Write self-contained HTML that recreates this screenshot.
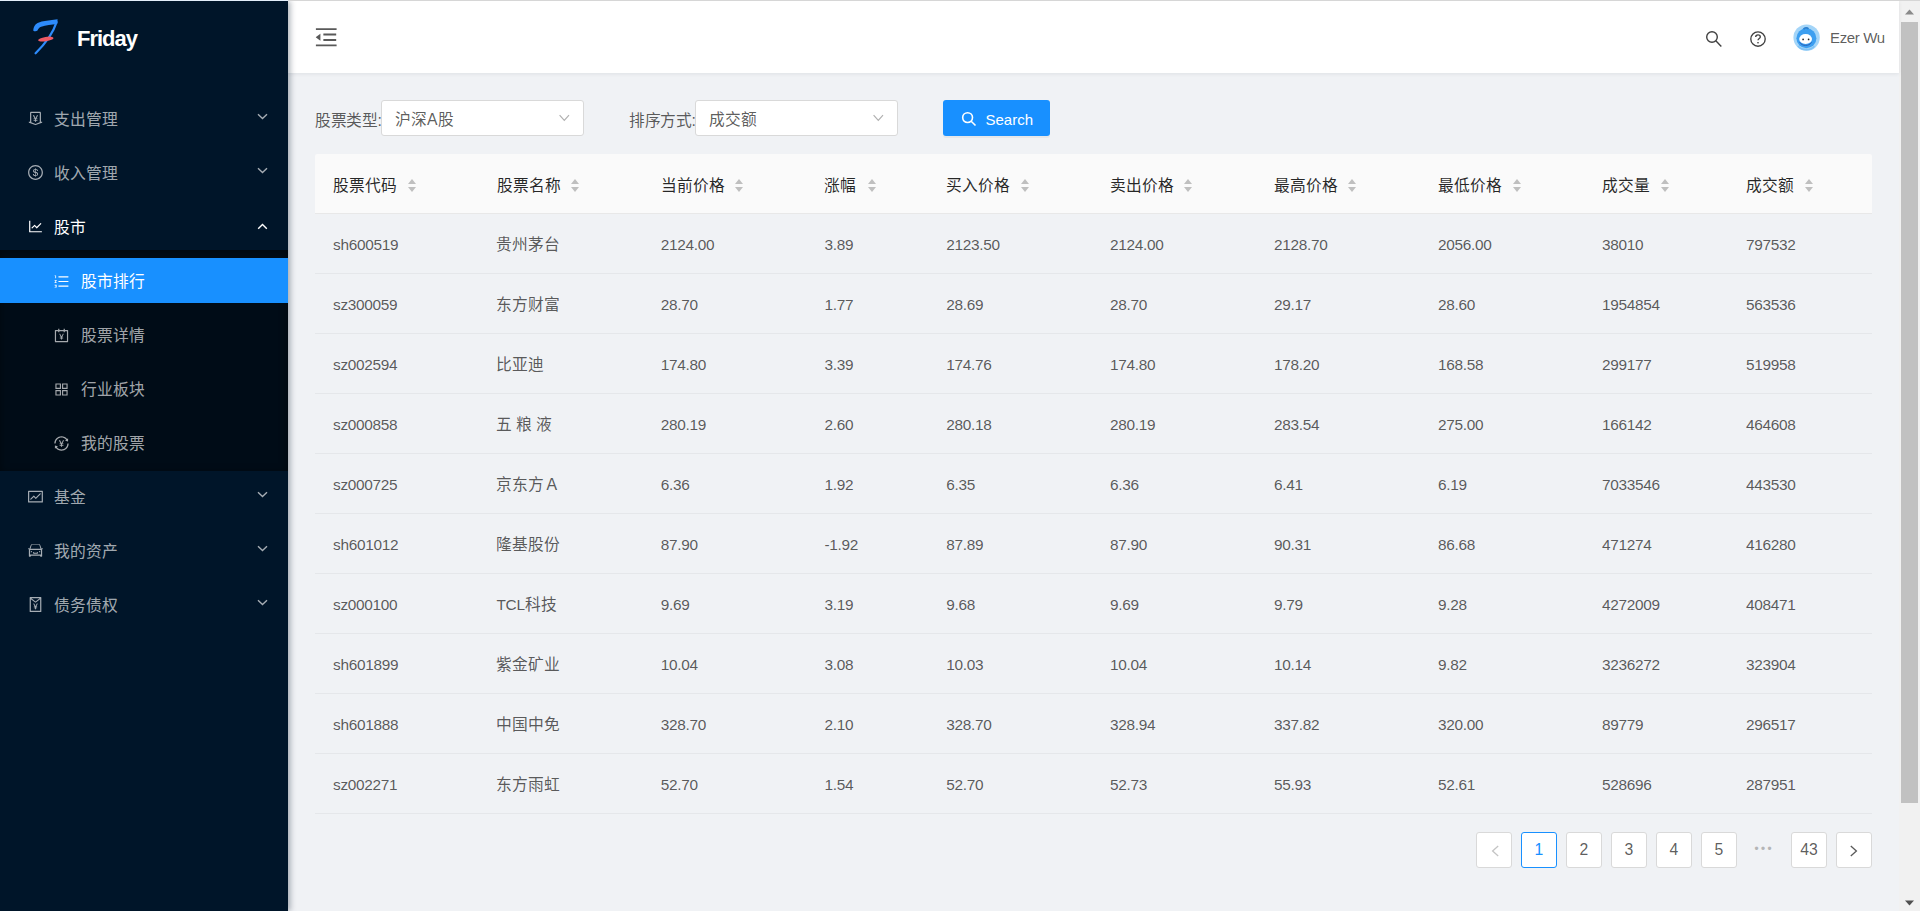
<!DOCTYPE html>
<html lang="zh-CN">
<head>
<meta charset="utf-8">
<title>Friday</title>
<style>
*{box-sizing:border-box;margin:0;padding:0}
html,body{width:1920px;height:911px;overflow:hidden}
body{position:relative;background:#f0f2f5;font-family:"Liberation Sans",sans-serif;font-size:15.75px;color:rgba(0,0,0,.65)}
.topline{position:absolute;left:0;top:0;width:1920px;height:1px;background:#d6d6d6;z-index:10}
.topline:before{content:"";position:absolute;left:0;top:0;width:288px;height:1px;background:#e3eefa}
#sider{position:absolute;left:0;top:1px;width:288px;height:910px;background:#001529;box-shadow:2px 0 6px rgba(0,21,41,.35);z-index:3}
.logo{position:absolute;left:0;top:0;width:288px;height:72px}
.logo .t{position:absolute;left:77px;top:27.3px;font-size:22px;line-height:22px;font-weight:bold;color:#fff;letter-spacing:-1px}
.mi{position:absolute;left:0;width:288px;height:45px;color:rgba(255,255,255,.65)}
.mi .ic{position:absolute;left:26.5px;top:14.3px;width:17px;height:17px}
.mi .tx{position:absolute;left:54px;top:1px;line-height:45px;white-space:nowrap}
.mi .ar{position:absolute;left:257px;top:17px}
.sub .ic{left:53px;top:15px}
.sub .tx{left:81px}
.submenu{position:absolute;left:0;top:248.5px;width:288px;height:221px;background:#000c17;box-shadow:inset 0 2px 8px rgba(0,0,0,.45)}
.sel{background:#1890ff;color:#fff}
.open{color:#fff}

#header{position:absolute;left:288px;top:1px;width:1611px;height:72px;background:#fff;box-shadow:0 1px 4px rgba(0,21,41,.08);z-index:2}
#header .trig{position:absolute;left:25.25px;top:23.25px}
#header .hico{position:absolute}
#header .name{position:absolute;left:1542px;top:26.5px;font-size:15px;letter-spacing:-.35px;color:rgba(0,0,0,.65);line-height:20px}

.lbl{position:absolute;top:103px;line-height:36px;color:rgba(0,0,0,.65);white-space:nowrap;letter-spacing:-.4px}
.sel-box{position:absolute;top:100px;width:203px;height:36px;background:#fff;border:1px solid #d9d9d9;border-radius:3px}
.sel-box .v{position:absolute;left:13px;top:2px;line-height:34px;color:rgba(0,0,0,.65)}
.sel-box svg{position:absolute;left:176.5px;top:12px}
.btn{position:absolute;left:943px;top:100px;width:107px;height:36px;background:#1890ff;border-radius:3px;color:#fff;box-shadow:0 2px 0 rgba(0,0,0,.045)}
.btn svg{position:absolute;left:18px;top:11px}
.btn span{position:absolute;left:42.5px;top:1.5px;line-height:36px;font-size:15px}

#table{position:absolute;left:315px;top:154px;width:1557px}
.thead{position:absolute;left:0;top:0;width:1557px;height:60px;background:#fafafa;border-bottom:1px solid #e8e8e8;border-radius:2px 2px 0 0}
.th{position:absolute;top:1.5px;line-height:59px;color:rgba(0,0,0,.85);white-space:nowrap}
.so{position:absolute;top:25px}
.row{position:absolute;left:0;width:1557px;height:60px;border-bottom:1px solid #e5e7ea}
.td{position:absolute;top:.5px;line-height:60px;white-space:nowrap}
.lt{font-size:15.4px;letter-spacing:-.3px;position:relative;top:.2px}

.pg{position:absolute;top:832px;width:36px;height:36px;border:1px solid #d9d9d9;border-radius:3px;background:#fff;text-align:center;line-height:34px;color:rgba(0,0,0,.65)}
.pg.act{border-color:#1890ff;color:#1890ff}
.pg.dis{color:rgba(0,0,0,.25)}
.ell{position:absolute;top:832px;left:1746px;width:36px;height:36px;text-align:center;line-height:34px;color:rgba(0,0,0,.25);letter-spacing:2px;font-size:13px}

#sb{position:absolute;left:1899px;top:1px;width:21px;height:910px;background:#f1f1f1}
#sb .thumb{position:absolute;left:2px;top:21px;width:17px;height:781px;background:#c1c1c1}
</style>
</head>
<body>
<div class="topline"></div>
<div id="sider">
  <div class="logo">
    <svg style="position:absolute;left:0;top:-1px" width="80" height="72" viewBox="0 0 80 72">
      <path d="M33.2 30.4C33.6 27 34.8 24.2 37.6 22.9 42.5 21 50 20.1 57.6 19.3L57.2 24C51.5 24.4 45.8 25.3 41.2 26.8 39.4 27.4 38.2 28.8 37.5 30.6 36.3 31.7 34.2 31.6 33.2 30.4Z" fill="#2d8bfb"/>
      <path d="M56.6 22C53.8 31 47.5 41.5 35.6 53.2" fill="none" stroke="#2d8bfb" stroke-width="2.3" stroke-linecap="round"/>
      <ellipse cx="45.8" cy="39.1" rx="7.8" ry="2.2" transform="rotate(-9 45.8 39.1)" fill="#f05a64"/>
    </svg>
    <div class="t">Friday</div>
  </div>
  <div class="submenu"></div>
  <!-- menu items inserted below -->
  <div class="mi" style="top:95px"><svg class="ic" viewBox="0 0 1024 1024" width="17" height="17"><path fill="currentColor" d="M911.5 700.7a8 8 0 00-10.3-4.8L840 718.2V180c0-37.6-30.4-68-68-68H252c-37.6 0-68 30.4-68 68v538.2l-61.3-22.3c-.9-.3-1.8-.5-2.7-.5-4.4 0-8 3.6-8 8V763c0 3.3 2.1 6.3 5.3 7.5L501 910.1c7.1 2.6 14.8 2.6 21.9 0l383.8-139.5c3.2-1.2 5.3-4.2 5.3-7.5v-59.6c0-1-.2-1.9-.5-2.8zM512 837.5l-256-93.1V184h512v560.4l-256 93.1zM660.6 312h-54.5c-3 0-5.8 1.7-7.1 4.4l-84.7 168.8H511l-84.7-168.8a8 8 0 00-7.1-4.4h-55.7c-1.3 0-2.6.3-3.8 1-3.9 2.1-5.3 7-3.2 10.8l103.9 191.6h-57c-4.4 0-8 3.6-8 8v27.1c0 4.4 3.6 8 8 8h76v39h-76c-4.4 0-8 3.6-8 8v27.1c0 4.4 3.6 8 8 8h76V704c0 4.4 3.6 8 8 8h49.9c4.4 0 8-3.6 8-8v-63.5h76.3c4.4 0 8-3.6 8-8v-27.1c0-4.4-3.6-8-8-8h-76.3v-39h76.3c4.4 0 8-3.6 8-8v-27.1c0-4.4-3.6-8-8-8H564l103.7-191.6c.6-1.2 1-2.5 1-3.8-.1-4.3-3.7-7.9-8.1-7.9z"/></svg><span class="tx">支出管理</span><svg class="ar" width="11" height="7" viewBox="0 0 11 7"><path d="M1 1.3L5.5 5.6 10 1.3" fill="none" stroke="currentColor" stroke-width="1.4"/></svg></div>
<div class="mi" style="top:149px"><svg class="ic" viewBox="0 0 1024 1024" width="17" height="17"><path fill="currentColor" d="M512 64C264.6 64 64 264.6 64 512s200.6 448 448 448 448-200.6 448-448S759.4 64 512 64zm0 820c-205.4 0-372-166.6-372-372s166.6-372 372-372 372 166.6 372 372-166.6 372-372 372zm47.7-395.2l-25.4-5.9V348.6c38 5.2 61.5 30.1 65.5 59.2.5 4 3.9 6.9 7.9 6.9h44.9c4.7 0 8.4-4.1 8-8.8-6.1-62.3-57.4-102.3-125.9-109.2V263c0-4.4-3.6-8-8-8h-28.1c-4.4 0-8 3.6-8 8v33c-70.8 6.9-126.2 46-126.2 119 0 67.6 49.8 100.2 102.1 112.7l24.7 6.3v142.7c-44.2-5.9-69-29.5-74.1-61.3-.6-3.8-4-6.6-7.9-6.6H363c-4.7 0-8.4 4-8 8.7 4.5 55 46.2 105.6 135.2 112.1V761c0 4.4 3.6 8 8 8h28.4c4.4 0 8-3.6 8-8.1l-.2-31.7c78.3-6.9 134.3-48.8 134.3-124-.1-69.4-44.2-100.4-109-116.4zm-68.6-16.2c-5.6-1.6-10.3-3.1-15-5-33.8-12.2-49.5-31.9-49.5-57.3 0-36.3 27.5-57 64.5-61.7v124zM534.3 677V543.3c3.1.9 5.9 1.6 8.8 2.2 47.3 14.4 63.2 34.4 63.2 65.1 0 39.1-29.4 62.6-72 66.4z"/></svg><span class="tx">收入管理</span><svg class="ar" width="11" height="7" viewBox="0 0 11 7"><path d="M1 1.3L5.5 5.6 10 1.3" fill="none" stroke="currentColor" stroke-width="1.4"/></svg></div>
<div class="mi open" style="top:203px"><svg class="ic" viewBox="0 0 1024 1024" width="17" height="17"><path fill="currentColor" d="M888 792H200V168c0-4.4-3.6-8-8-8h-56c-4.4 0-8 3.6-8 8v688c0 4.4 3.6 8 8 8h752c4.4 0 8-3.6 8-8v-56c0-4.4-3.6-8-8-8zM305.8 637.7c3.1 3.1 8.1 3.1 11.3 0l138.3-137.6L583 628.5c3.1 3.1 8.2 3.1 11.3 0l275.4-275.3c3.1-3.1 3.1-8.2 0-11.3l-39.6-39.6a8.03 8.03 0 00-11.3 0l-230 229.9L461.4 404a8.03 8.03 0 00-11.3 0L266.3 586.7a8.03 8.03 0 000 11.3l39.5 39.7z"/></svg><span class="tx">股市</span><svg class="ar" style="top:18.5px" width="11" height="7" viewBox="0 0 11 7"><path d="M1.2 5.7L5.5 1.5 9.8 5.7" fill="none" stroke="currentColor" stroke-width="1.4"/></svg></div>
<div class="mi sub sel" style="top:257px"><svg class="ic" viewBox="0 0 1024 1024" width="17" height="17"><path fill="currentColor" d="M920 760H336c-4.4 0-8 3.6-8 8v56c0 4.4 3.6 8 8 8h584c4.4 0 8-3.6 8-8v-56c0-4.4-3.6-8-8-8zm0-568H336c-4.4 0-8 3.6-8 8v56c0 4.4 3.6 8 8 8h584c4.4 0 8-3.6 8-8v-56c0-4.4-3.6-8-8-8zm0 284H336c-4.4 0-8 3.6-8 8v56c0 4.4 3.6 8 8 8h584c4.4 0 8-3.6 8-8v-56c0-4.4-3.6-8-8-8zM216 712H100c-2.2 0-4 1.8-4 4v34c0 2.2 1.8 4 4 4h72.4v20.5h-35.7c-2.2 0-4 1.8-4 4v34c0 2.2 1.8 4 4 4h35.7V838H100c-2.2 0-4 1.8-4 4v34c0 2.2 1.8 4 4 4h116c2.2 0 4-1.8 4-4V716c0-2.2-1.8-4-4-4zM100 188h38v120c0 2.2 1.8 4 4 4h40c2.2 0 4-1.8 4-4V152c0-4.4-3.6-8-8-8h-78c-2.2 0-4 1.8-4 4v36c0 2.2 1.8 4 4 4zm116 240H100c-2.2 0-4 1.8-4 4v36c0 2.2 1.8 4 4 4h68.4l-70.3 77.7a8.3 8.3 0 00-2.1 5.4V592c0 2.2 1.8 4 4 4h116c2.2 0 4-1.8 4-4v-36c0-2.2-1.8-4-4-4h-68.4l70.3-77.7a8.3 8.3 0 002.1-5.4V432c0-2.2-1.8-4-4-4z"/></svg><span class="tx">股市排行</span></div>
<div class="mi sub" style="top:311px"><svg class="ic" viewBox="0 0 1024 1024" width="17" height="17"><path fill="currentColor" d="M880 184H712v-64c0-4.4-3.6-8-8-8h-56c-4.4 0-8 3.6-8 8v64H384v-64c0-4.4-3.6-8-8-8h-56c-4.4 0-8 3.6-8 8v64H144c-17.7 0-32 14.3-32 32v664c0 17.7 14.3 32 32 32h736c17.7 0 32-14.3 32-32V216c0-17.7-14.3-32-32-32zm-40 656H184V256h128v48c0 4.4 3.6 8 8 8h56c4.4 0 8-3.6 8-8v-48h256v48c0 4.4 3.6 8 8 8h56c4.4 0 8-3.6 8-8v-48h128v584zM639.5 414h-45c-3 0-5.8 1.7-7.1 4.4L514 563.8h-2.8l-73.4-145.4a8 8 0 00-7.1-4.4h-46c-1.3 0-2.7.3-3.8 1-3.9 2.1-5.3 7-3.2 10.9l89.3 164h-48.6c-4.4 0-8 3.6-8 8v21.3c0 4.4 3.6 8 8 8h65.1v33.7h-65.1c-4.4 0-8 3.6-8 8v21.3c0 4.4 3.6 8 8 8h65.1V752c0 4.4 3.6 8 8 8h41.3c4.4 0 8-3.6 8-8v-53.8h65.4c4.4 0 8-3.6 8-8v-21.3c0-4.4-3.6-8-8-8h-65.4v-33.7h65.4c4.4 0 8-3.6 8-8v-21.3c0-4.4-3.6-8-8-8h-49.1l89.3-164.1c.6-1.2 1-2.5 1-3.8.1-4.4-3.4-8-7.9-8z"/></svg><span class="tx">股票详情</span></div>
<div class="mi sub" style="top:365px"><svg class="ic" viewBox="0 0 1024 1024" width="17" height="17"><path fill="currentColor" d="M464 144H160c-8.8 0-16 7.2-16 16v304c0 8.8 7.2 16 16 16h304c8.8 0 16-7.2 16-16V160c0-8.8-7.2-16-16-16zm-52 268H212V212h200v200zm452-268H560c-8.8 0-16 7.2-16 16v304c0 8.8 7.2 16 16 16h304c8.8 0 16-7.2 16-16V160c0-8.8-7.2-16-16-16zm-52 268H612V212h200v200zM464 544H160c-8.8 0-16 7.2-16 16v304c0 8.8 7.2 16 16 16h304c8.8 0 16-7.2 16-16V560c0-8.8-7.2-16-16-16zm-52 268H212V612h200v200zm452-268H560c-8.8 0-16 7.2-16 16v304c0 8.8 7.2 16 16 16h304c8.8 0 16-7.2 16-16V560c0-8.8-7.2-16-16-16zm-52 268H612V612h200v200z"/></svg><span class="tx">行业板块</span></div>
<div class="mi sub" style="top:419px"><svg class="ic" viewBox="0 0 1024 1024" width="17" height="17"><path fill="currentColor" d="M668.6 320c0-4.4-3.6-8-8-8h-54.5c-3 0-5.8 1.7-7.1 4.4l-84.7 168.8H511l-84.7-168.8a8 8 0 00-7.1-4.4h-55.7c-1.3 0-2.6.3-3.8 1-3.9 2.1-5.3 7-3.2 10.8l103.9 191.6h-57c-4.4 0-8 3.6-8 8v27.1c0 4.4 3.6 8 8 8h76v39h-76c-4.4 0-8 3.6-8 8v27.1c0 4.4 3.6 8 8 8h76V704c0 4.4 3.6 8 8 8h49.9c4.4 0 8-3.6 8-8v-63.5h76.3c4.4 0 8-3.6 8-8v-27.1c0-4.4-3.6-8-8-8h-76.3v-39h76.3c4.4 0 8-3.6 8-8v-27.1c0-4.4-3.6-8-8-8H564l103.7-191.6c.5-1.1.9-2.4.9-3.7zM157.9 504.2a352.7 352.7 0 01103.5-242.4c32.5-32.5 70.3-58.1 112.4-75.9 43.6-18.4 89.9-27.8 137.6-27.8 47.8 0 94.1 9.3 137.6 27.8 42.1 17.8 79.9 43.4 112.4 75.9 10 10 19.3 20.5 27.9 31.4l-50 39.1a8 8 0 003 14.1l156.8 38.3c5 1.2 9.9-2.6 9.9-7.7l.8-161.5c0-6.7-7.7-10.5-12.9-6.3l-47.8 37.4C770.7 146.3 648.6 82 511.5 82 277 82 86.3 270.1 82 503.8a8 8 0 008 8.2h60c4.3 0 7.8-3.5 7.9-7.8zM934 512h-60c-4.3 0-7.9 3.5-8 7.8a352.7 352.7 0 01-103.5 242.4 352.57 352.57 0 01-112.4 75.9c-43.6 18.4-89.9 27.8-137.6 27.8s-94.1-9.3-137.6-27.8a352.57 352.57 0 01-112.4-75.9c-10-10-19.3-20.5-27.9-31.4l49.9-39.1a8 8 0 00-3-14.1l-156.8-38.3c-5-1.2-9.9 2.6-9.9 7.7l-.8 161.7c0 6.7 7.7 10.5 12.9 6.3l47.8-37.4C253.3 877.7 375.4 942 512.5 942 747 942 937.7 753.9 942 520.2a8 8 0 00-8-8.2z"/></svg><span class="tx">我的股票</span></div>
<div class="mi" style="top:473px"><svg class="ic" viewBox="0 0 1024 1024" width="17" height="17"><path fill="currentColor" d="M926 164H94c-17.7 0-32 14.3-32 32v640c0 17.7 14.3 32 32 32h832c17.7 0 32-14.3 32-32V196c0-17.7-14.3-32-32-32zm-40 632H134V236h752v560zm-658.9-82.3c3.1 3.1 8.2 3.1 11.3 0l172.5-172.5 114.4 114.5c3.1 3.1 8.2 3.1 11.3 0l297-297.2c3.1-3.1 3.1-8.2 0-11.3l-36.8-36.8a8.03 8.03 0 00-11.3 0L531 565 416.6 450.5a8.03 8.03 0 00-11.3 0l-214.9 215a8.03 8.03 0 000 11.3l36.7 36.9z"/></svg><span class="tx">基金</span><svg class="ar" width="11" height="7" viewBox="0 0 11 7"><path d="M1 1.3L5.5 5.6 10 1.3" fill="none" stroke="currentColor" stroke-width="1.4"/></svg></div>
<div class="mi" style="top:527px"><svg class="ic" viewBox="0 0 1024 1024" width="17" height="17"><path fill="currentColor" d="M380 704h264c4.4 0 8-3.6 8-8v-84c0-4.4-3.6-8-8-8h-40c-4.4 0-8 3.6-8 8v36H428v-36c0-4.4-3.6-8-8-8h-40c-4.4 0-8 3.6-8 8v84c0 4.4 3.6 8 8 8zm340-123a40 40 0 1080 0 40 40 0 10-80 0zm239-167.6L935.3 372a8 8 0 00-10.9-2.9l-50.7 29.6-78.3-216.2a63.9 63.9 0 00-60.9-44.4H301.2c-34.7 0-65.5 22.4-76.2 55.5l-74.6 205.2-50.8-29.6a8 8 0 00-10.9 2.9L65 413.4c-2.2 3.8-.9 8.6 2.9 10.8l60.4 35.2-14.5 40c-1.2 3.2-1.8 6.6-1.8 10v348.2c0 15.7 11.8 28.4 26.3 28.4h67.6c12.3 0 23-9.3 25.6-22.3l7.7-37.7h545.6l7.7 37.7c2.7 13 13.3 22.3 25.6 22.3h67.6c14.5 0 26.3-12.7 26.3-28.4V509.4c0-3.4-.6-6.8-1.8-10l-14.5-40 60.3-35.2a8 8 0 003-10.8zM840 517v237H184V517l15.6-42.6h624.8L840 517zM274.8 202.9c6.3-23.4 27.6-39.6 51.8-39.6h371.6c24.2 0 45.5 16.2 51.8 39.6l63.2 198.7H211.6l63.2-198.7zM224 581a40 40 0 1080 0 40 40 0 10-80 0z"/></svg><span class="tx">我的资产</span><svg class="ar" width="11" height="7" viewBox="0 0 11 7"><path d="M1 1.3L5.5 5.6 10 1.3" fill="none" stroke="currentColor" stroke-width="1.4"/></svg></div>
<div class="mi" style="top:581px"><svg class="ic" viewBox="0 0 1024 1024" width="17" height="17"><path fill="currentColor" d="M440.6 462.6a8.38 8.38 0 00-7.5-4.6h-48.8c-1.3 0-2.6.4-3.9 1a8.4 8.4 0 00-3.4 11.4l87.4 161.1H419c-4.6 0-8.4 3.8-8.4 8.4V665c0 4.6 3.8 8.4 8.4 8.4h63V702h-63c-4.6 0-8.4 3.8-8.4 8.4v25.1c0 4.6 3.8 8.4 8.4 8.4h63v49.9c0 4.6 3.8 8.4 8.4 8.4h43.7c4.6 0 8.4-3.8 8.4-8.4v-49.9h63.3c4.7 0 8.4-3.8 8.2-8.5v-25c0-4.6-3.8-8.4-8.4-8.4h-63.3v-28.6h63.3c4.6 0 8.4-3.8 8.4-8.4v-25.1c0-4.6-3.8-8.4-8.4-8.4h-45.9l87.2-161a8.45 8.45 0 00-7.4-12.4h-47.8c-3.1 0-6 1.8-7.5 4.6l-71.9 141.9-71.7-142zM832 64H192c-17.7 0-32 14.3-32 32v832c0 17.7 14.3 32 32 32h640c17.7 0 32-14.3 32-32V96c0-17.7-14.3-32-32-32zm-40 824H232V193.1l260.3 204.1c11.6 9.1 27.9 9.1 39.5 0L792 193.1V888zm0-751.3h-31.7L512 331.3 263.7 136.7H232v-.7h560v.7z"/></svg><span class="tx">债务债权</span><svg class="ar" width="11" height="7" viewBox="0 0 11 7"><path d="M1 1.3L5.5 5.6 10 1.3" fill="none" stroke="currentColor" stroke-width="1.4"/></svg></div>
</div>
<div id="header">
  <svg class="trig" width="26.5" height="26.5" viewBox="0 0 1024 1024"><path fill="#595959" d="M408 442h480c4.4 0 8-3.6 8-8v-56c0-4.4-3.6-8-8-8H408c-4.4 0-8 3.6-8 8v56c0 4.4 3.6 8 8 8zm-8 204c0 4.4 3.6 8 8 8h480c4.4 0 8-3.6 8-8v-56c0-4.4-3.6-8-8-8H408c-4.4 0-8 3.6-8 8v56zm504-486H120c-4.4 0-8 3.6-8 8v56c0 4.4 3.6 8 8 8h784c4.4 0 8-3.6 8-8v-56c0-4.4-3.6-8-8-8zm0 632H120c-4.4 0-8 3.6-8 8v56c0 4.4 3.6 8 8 8h784c4.4 0 8-3.6 8-8v-56c0-4.4-3.6-8-8-8zM115.4 518.9L271.7 642c5.8 4.6 14.4.5 14.4-6.9V388.9c0-7.4-8.5-11.5-14.4-6.9L115.4 505.1a8.7 8.7 0 000 13.8z"/></svg><svg class="hico" style="left:1416px;top:28px" width="20" height="20" viewBox="0 0 20 20"><circle cx="8" cy="8" r="5.3" fill="none" stroke="#404040" stroke-width="1.4"/><path d="M11.8 11.8L17.3 17.4" stroke="#404040" stroke-width="1.4"/></svg><svg class="hico" style="left:1460px;top:28px" width="20" height="20" viewBox="0 0 20 20"><circle cx="10" cy="10" r="7.2" fill="none" stroke="#404040" stroke-width="1.35"/><path d="M7.7 8.1c0-1.3 1-2.2 2.3-2.2 1.3 0 2.3.9 2.3 2 0 1.5-2.3 1.7-2.3 3.4" fill="none" stroke="#404040" stroke-width="1.35"/><rect x="9.3" y="13" width="1.4" height="1.4" fill="#404040"/></svg><svg class="hico" style="left:1505px;top:23px" width="28" height="28" viewBox="0 0 28 28">
<circle cx="13.6" cy="13.6" r="13.2" fill="#a4d5f8"/>
<circle cx="13.4" cy="14.3" r="10" fill="#3d9ff0"/>
<path d="M10.5 5.2c1.2-1.6 3.6-1.8 5-.4" fill="none" stroke="#2a7fd0" stroke-width="1.8"/>
<ellipse cx="12.6" cy="15" rx="6.4" ry="5.1" fill="#fff"/>
<path d="M6.6 18.2c1.5 2.4 3.8 3.2 6 3.2 2.3 0 4.5-.9 6-3" fill="none" stroke="#2660b8" stroke-width="1"/>
<circle cx="10.1" cy="15.4" r=".85" fill="#222"/><circle cx="15.6" cy="15.4" r=".85" fill="#222"/>
<path d="M5 22c2 2.4 5 3.6 8.4 3.6s6.2-1.2 8-3.4" fill="none" stroke="#7ec2f5" stroke-width="1.6"/>
</svg><div class="name">Ezer Wu</div>
</div>
<div class="lbl" style="left:315px">股票类型:</div>
<div class="sel-box" style="left:381px"><span class="v">沪深A股</span><svg width="11" height="9" viewBox="0 0 11 9"><path d="M.6 2.2L5.3 7.3 10 2.2" fill="none" stroke="#b0b0b0" stroke-width="1.2"/></svg></div>
<div class="lbl" style="left:629px">排序方式:</div>
<div class="sel-box" style="left:695px"><span class="v">成交额</span><svg width="11" height="9" viewBox="0 0 11 9"><path d="M.6 2.2L5.3 7.3 10 2.2" fill="none" stroke="#b0b0b0" stroke-width="1.2"/></svg></div>
<div class="btn"><svg width="16" height="16" viewBox="0 0 16 16"><circle cx="6.6" cy="6.6" r="4.9" fill="none" stroke="#fff" stroke-width="1.6"/><path d="M10.2 10.2L14.5 14.5" stroke="#fff" stroke-width="1.6"/></svg><span>Search</span></div>
<div id="table"><div class="thead">
<div class="th" style="left:18px"><span class="hx">股票代码</span></div>
<svg class="so" style="left:93px" width="8" height="13" viewBox="0 0 8 13"><path d="M4 0L8 5H0z M4 13L8 8H0z" fill="#bfbfbf"/></svg>
<div class="th" style="left:181.5px"><span class="hx">股票名称</span></div>
<svg class="so" style="left:255.5px" width="8" height="13" viewBox="0 0 8 13"><path d="M4 0L8 5H0z M4 13L8 8H0z" fill="#bfbfbf"/></svg>
<div class="th" style="left:345.8px"><span class="hx">当前价格</span></div>
<svg class="so" style="left:420px" width="8" height="13" viewBox="0 0 8 13"><path d="M4 0L8 5H0z M4 13L8 8H0z" fill="#bfbfbf"/></svg>
<div class="th" style="left:509.4px"><span class="hx">涨幅</span></div>
<svg class="so" style="left:552.5px" width="8" height="13" viewBox="0 0 8 13"><path d="M4 0L8 5H0z M4 13L8 8H0z" fill="#bfbfbf"/></svg>
<div class="th" style="left:631.3px"><span class="hx">买入价格</span></div>
<svg class="so" style="left:705.5px" width="8" height="13" viewBox="0 0 8 13"><path d="M4 0L8 5H0z M4 13L8 8H0z" fill="#bfbfbf"/></svg>
<div class="th" style="left:795px"><span class="hx">卖出价格</span></div>
<svg class="so" style="left:868.5px" width="8" height="13" viewBox="0 0 8 13"><path d="M4 0L8 5H0z M4 13L8 8H0z" fill="#bfbfbf"/></svg>
<div class="th" style="left:959px"><span class="hx">最高价格</span></div>
<svg class="so" style="left:1033px" width="8" height="13" viewBox="0 0 8 13"><path d="M4 0L8 5H0z M4 13L8 8H0z" fill="#bfbfbf"/></svg>
<div class="th" style="left:1123px"><span class="hx">最低价格</span></div>
<svg class="so" style="left:1197.5px" width="8" height="13" viewBox="0 0 8 13"><path d="M4 0L8 5H0z M4 13L8 8H0z" fill="#bfbfbf"/></svg>
<div class="th" style="left:1287px"><span class="hx">成交量</span></div>
<svg class="so" style="left:1346px" width="8" height="13" viewBox="0 0 8 13"><path d="M4 0L8 5H0z M4 13L8 8H0z" fill="#bfbfbf"/></svg>
<div class="th" style="left:1431px"><span class="hx">成交额</span></div>
<svg class="so" style="left:1490px" width="8" height="13" viewBox="0 0 8 13"><path d="M4 0L8 5H0z M4 13L8 8H0z" fill="#bfbfbf"/></svg>
</div>
<div class="row" style="top:60px">
<div class="td" style="left:18px"><span class="lt">sh600519</span></div>
<div class="td" style="left:180.5px">贵州茅台</div>
<div class="td" style="left:345.8px"><span class="lt">2124.00</span></div>
<div class="td" style="left:509.4px"><span class="lt">3.89</span></div>
<div class="td" style="left:631.3px"><span class="lt">2123.50</span></div>
<div class="td" style="left:795px"><span class="lt">2124.00</span></div>
<div class="td" style="left:959px"><span class="lt">2128.70</span></div>
<div class="td" style="left:1123px"><span class="lt">2056.00</span></div>
<div class="td" style="left:1287px"><span class="lt">38010</span></div>
<div class="td" style="left:1431px"><span class="lt">797532</span></div>
</div>
<div class="row" style="top:120px">
<div class="td" style="left:18px"><span class="lt">sz300059</span></div>
<div class="td" style="left:180.5px">东方财富</div>
<div class="td" style="left:345.8px"><span class="lt">28.70</span></div>
<div class="td" style="left:509.4px"><span class="lt">1.77</span></div>
<div class="td" style="left:631.3px"><span class="lt">28.69</span></div>
<div class="td" style="left:795px"><span class="lt">28.70</span></div>
<div class="td" style="left:959px"><span class="lt">29.17</span></div>
<div class="td" style="left:1123px"><span class="lt">28.60</span></div>
<div class="td" style="left:1287px"><span class="lt">1954854</span></div>
<div class="td" style="left:1431px"><span class="lt">563536</span></div>
</div>
<div class="row" style="top:180px">
<div class="td" style="left:18px"><span class="lt">sz002594</span></div>
<div class="td" style="left:180.5px">比亚迪</div>
<div class="td" style="left:345.8px"><span class="lt">174.80</span></div>
<div class="td" style="left:509.4px"><span class="lt">3.39</span></div>
<div class="td" style="left:631.3px"><span class="lt">174.76</span></div>
<div class="td" style="left:795px"><span class="lt">174.80</span></div>
<div class="td" style="left:959px"><span class="lt">178.20</span></div>
<div class="td" style="left:1123px"><span class="lt">168.58</span></div>
<div class="td" style="left:1287px"><span class="lt">299177</span></div>
<div class="td" style="left:1431px"><span class="lt">519958</span></div>
</div>
<div class="row" style="top:240px">
<div class="td" style="left:18px"><span class="lt">sz000858</span></div>
<div class="td" style="left:180.5px">五 粮 液</div>
<div class="td" style="left:345.8px"><span class="lt">280.19</span></div>
<div class="td" style="left:509.4px"><span class="lt">2.60</span></div>
<div class="td" style="left:631.3px"><span class="lt">280.18</span></div>
<div class="td" style="left:795px"><span class="lt">280.19</span></div>
<div class="td" style="left:959px"><span class="lt">283.54</span></div>
<div class="td" style="left:1123px"><span class="lt">275.00</span></div>
<div class="td" style="left:1287px"><span class="lt">166142</span></div>
<div class="td" style="left:1431px"><span class="lt">464608</span></div>
</div>
<div class="row" style="top:300px">
<div class="td" style="left:18px"><span class="lt">sz000725</span></div>
<div class="td" style="left:180.5px">京东方Ａ</div>
<div class="td" style="left:345.8px"><span class="lt">6.36</span></div>
<div class="td" style="left:509.4px"><span class="lt">1.92</span></div>
<div class="td" style="left:631.3px"><span class="lt">6.35</span></div>
<div class="td" style="left:795px"><span class="lt">6.36</span></div>
<div class="td" style="left:959px"><span class="lt">6.41</span></div>
<div class="td" style="left:1123px"><span class="lt">6.19</span></div>
<div class="td" style="left:1287px"><span class="lt">7033546</span></div>
<div class="td" style="left:1431px"><span class="lt">443530</span></div>
</div>
<div class="row" style="top:360px">
<div class="td" style="left:18px"><span class="lt">sh601012</span></div>
<div class="td" style="left:180.5px">隆基股份</div>
<div class="td" style="left:345.8px"><span class="lt">87.90</span></div>
<div class="td" style="left:509.4px"><span class="lt">-1.92</span></div>
<div class="td" style="left:631.3px"><span class="lt">87.89</span></div>
<div class="td" style="left:795px"><span class="lt">87.90</span></div>
<div class="td" style="left:959px"><span class="lt">90.31</span></div>
<div class="td" style="left:1123px"><span class="lt">86.68</span></div>
<div class="td" style="left:1287px"><span class="lt">471274</span></div>
<div class="td" style="left:1431px"><span class="lt">416280</span></div>
</div>
<div class="row" style="top:420px">
<div class="td" style="left:18px"><span class="lt">sz000100</span></div>
<div class="td" style="left:181.5px"><span class="lt">TCL</span>科技</div>
<div class="td" style="left:345.8px"><span class="lt">9.69</span></div>
<div class="td" style="left:509.4px"><span class="lt">3.19</span></div>
<div class="td" style="left:631.3px"><span class="lt">9.68</span></div>
<div class="td" style="left:795px"><span class="lt">9.69</span></div>
<div class="td" style="left:959px"><span class="lt">9.79</span></div>
<div class="td" style="left:1123px"><span class="lt">9.28</span></div>
<div class="td" style="left:1287px"><span class="lt">4272009</span></div>
<div class="td" style="left:1431px"><span class="lt">408471</span></div>
</div>
<div class="row" style="top:480px">
<div class="td" style="left:18px"><span class="lt">sh601899</span></div>
<div class="td" style="left:180.5px">紫金矿业</div>
<div class="td" style="left:345.8px"><span class="lt">10.04</span></div>
<div class="td" style="left:509.4px"><span class="lt">3.08</span></div>
<div class="td" style="left:631.3px"><span class="lt">10.03</span></div>
<div class="td" style="left:795px"><span class="lt">10.04</span></div>
<div class="td" style="left:959px"><span class="lt">10.14</span></div>
<div class="td" style="left:1123px"><span class="lt">9.82</span></div>
<div class="td" style="left:1287px"><span class="lt">3236272</span></div>
<div class="td" style="left:1431px"><span class="lt">323904</span></div>
</div>
<div class="row" style="top:540px">
<div class="td" style="left:18px"><span class="lt">sh601888</span></div>
<div class="td" style="left:180.5px">中国中免</div>
<div class="td" style="left:345.8px"><span class="lt">328.70</span></div>
<div class="td" style="left:509.4px"><span class="lt">2.10</span></div>
<div class="td" style="left:631.3px"><span class="lt">328.70</span></div>
<div class="td" style="left:795px"><span class="lt">328.94</span></div>
<div class="td" style="left:959px"><span class="lt">337.82</span></div>
<div class="td" style="left:1123px"><span class="lt">320.00</span></div>
<div class="td" style="left:1287px"><span class="lt">89779</span></div>
<div class="td" style="left:1431px"><span class="lt">296517</span></div>
</div>
<div class="row" style="top:600px">
<div class="td" style="left:18px"><span class="lt">sz002271</span></div>
<div class="td" style="left:180.5px">东方雨虹</div>
<div class="td" style="left:345.8px"><span class="lt">52.70</span></div>
<div class="td" style="left:509.4px"><span class="lt">1.54</span></div>
<div class="td" style="left:631.3px"><span class="lt">52.70</span></div>
<div class="td" style="left:795px"><span class="lt">52.73</span></div>
<div class="td" style="left:959px"><span class="lt">55.93</span></div>
<div class="td" style="left:1123px"><span class="lt">52.61</span></div>
<div class="td" style="left:1287px"><span class="lt">528696</span></div>
<div class="td" style="left:1431px"><span class="lt">287951</span></div>
</div>
</div>
<div class="pg dis" style="left:1476px"><svg width="10" height="12" viewBox="0 0 10 12" style="position:absolute;left:12.5px;top:11.5px"><path d="M8.2 1L2.6 6l5.6 5" fill="none" stroke="#c4c4c4" stroke-width="1.3"/></svg></div>
<div class="pg act" style="left:1521px">1</div>
<div class="pg" style="left:1566px">2</div>
<div class="pg" style="left:1611px">3</div>
<div class="pg" style="left:1656px">4</div>
<div class="pg" style="left:1701px">5</div>
<div class="pg" style="left:1791px">43</div>
<div class="pg" style="left:1836px"><svg width="10" height="12" viewBox="0 0 10 12" style="position:absolute;left:12px;top:11.5px"><path d="M1.8 1l5.6 5-5.6 5" fill="none" stroke="#595959" stroke-width="1.3"/></svg></div>
<div class="ell">•••</div>
<div id="sb"><div class="thumb"></div>
<svg style="position:absolute;left:6px;top:8px" width="9" height="6" viewBox="0 0 9 6"><path d="M0 5.5 L4.5 0.5 L9 5.5Z" fill="#8a8a8a"/></svg>
<svg style="position:absolute;left:6px;top:899px" width="9" height="6" viewBox="0 0 9 6"><path d="M0 0.5 L4.5 5.5 L9 0.5Z" fill="#505050"/></svg>
</div>
</body>
</html>
